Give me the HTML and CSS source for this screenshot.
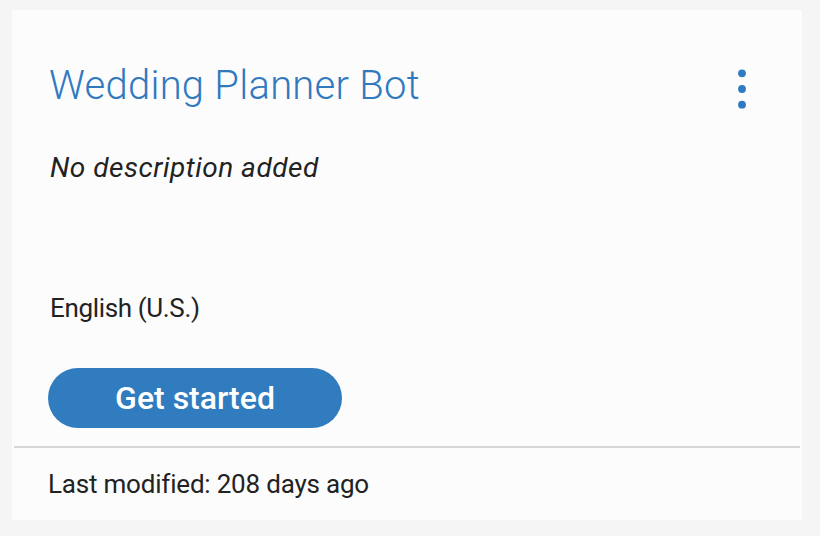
FILE: index.html
```html
<!DOCTYPE html>
<html lang="en">
<head>
<meta charset="utf-8">
<title>Wedding Planner Bot</title>
<link rel="stylesheet" href="styles.css">
</head>
<body>
  <div class="card">
    <div class="card-body">
      <div class="card-header">
        <h2 class="card-title">Wedding Planner Bot</h2>
        <button class="kebab" aria-label="More options">
          <svg width="8" height="40" viewBox="0 0 8 40" aria-hidden="true">
            <circle cx="4" cy="4.3" r="3.9" fill="#307bbf"/>
            <circle cx="4" cy="20" r="3.9" fill="#307bbf"/>
            <circle cx="4" cy="35.7" r="3.9" fill="#307bbf"/>
          </svg>
        </button>
      </div>
      <p class="card-desc">No description added</p>
      <p class="card-lang">English (U.S.)</p>
      <button class="btn-primary">Get started</button>
    </div>
    <div class="divider"></div>
    <div class="card-footer">Last modified: 208 days ago</div>
  </div>
</body>
</html>
```

FILE: styles.css
```css
html, body {
  margin: 0;
  padding: 0;
}
body {
  background: #f5f5f5;
  font-family: Roboto, "Noto Sans", "Liberation Sans", sans-serif;
  color: #222;
  padding: 10px 18px 16px 12px;
}
.card {
  width: 790px;
  height: 510px;
  box-sizing: border-box;
  background: #fcfcfc;
  display: flex;
  flex-direction: column;
}
.card-body {
  padding: 52px 36px 0 37px;
  display: flex;
  flex-direction: column;
  align-items: flex-start;
}
.card-header {
  align-self: stretch;
  display: flex;
  justify-content: space-between;
  align-items: flex-start;
  margin-right: 20px;
}
.card-title {
  margin: 0;
  font-size: 40px;
  line-height: 48px;
  font-weight: 300;
  letter-spacing: 0.25px;
  color: #3079bf;
}
.kebab {
  border: 0;
  background: none;
  padding: 0;
  margin-top: 7px;
  display: block;
  width: 8px;
  height: 40px;
}
.kebab svg {
  display: block;
}
.card-desc {
  margin: 40px 0 0 1px;
  font-size: 28px;
  line-height: 36px;
  font-style: italic;
  letter-spacing: 0.5px;
  color: #222;
}
.card-lang {
  margin: 106px 0 0 1px;
  font-size: 26px;
  line-height: 32px;
  letter-spacing: -0.35px;
  color: #222;
}
.btn-primary {
  margin: 44px 0 0 -1px;
  width: 294px;
  height: 60px;
  border: 0;
  border-radius: 30px;
  background: #307cbf;
  color: #fff;
  font-family: inherit;
  font-size: 32px;
  font-weight: 500;
  padding: 0;
  display: flex;
  align-items: center;
  justify-content: center;
}
.divider {
  margin: 18px 2px 0;
  height: 2px;
  background: #d6d6d6;
}
.card-footer {
  padding: 20px 36px 20px 36px;
  font-size: 26px;
  line-height: 32px;
  letter-spacing: -0.2px;
  color: #222;
}
```
